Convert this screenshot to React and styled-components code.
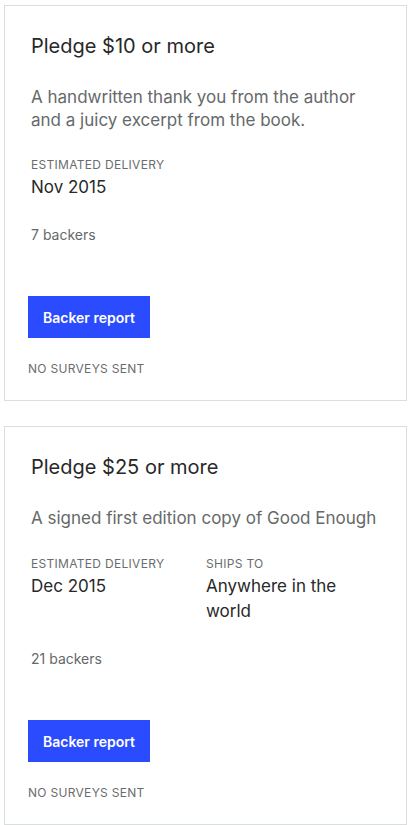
import styled, { createGlobalStyle } from "styled-components";

const GlobalStyle = createGlobalStyle`
  body {
    margin: 0;
    background: #fff;
    font-family: Inter, "Noto Sans", sans-serif;
    -webkit-font-smoothing: antialiased;
  }
`;

const Page = styled.div`
  display: flex;
  flex-direction: column;
  gap: 25px;
  padding: 5px 5px 0 4px;
`;

const Card = styled.section`
  border: 1px solid #dcdedd;
  padding: 26px 23px 23px 23px;
`;

const Title = styled.h2`
  margin: 0 0 0 3px;
  font-size: 20px;
  line-height: 28px;
  font-weight: 400;
  color: #282828;
`;

const Description = styled.p`
  margin: 26px 0 0 3px;
  font-size: 17px;
  line-height: 23px;
  color: #656969;
`;

const Details = styled.div`
  display: grid;
  grid-template-columns: 175px 160px;
  margin: ${(p) => (p.$wide ? 26 : 25)}px 0 0 3px;
`;

const Label = styled.div`
  font-size: 12px;
  line-height: 16px;
  letter-spacing: 0.3px;
  text-transform: uppercase;
  color: #6a6d6d;
`;

const Value = styled.div`
  margin-top: 2px;
  font-size: 17px;
  line-height: 25px;
  color: #282828;
`;

const Backers = styled.p`
  margin: 25px 0 0 3px;
  font-size: 14px;
  line-height: 20px;
  color: #656969;
`;

const Button = styled.button`
  display: block;
  margin-top: 51px;
  height: 42px;
  padding: 0 15px;
  border: none;
  background: #2a4cfe;
  color: #fff;
  font-family: Inter, "Noto Sans", sans-serif;
  font-size: 14px;
  font-weight: 600;
  cursor: pointer;
`;

const Surveys = styled.p`
  margin: 23px 0 0;
  font-size: 12px;
  line-height: 16px;
  letter-spacing: 0.3px;
  color: #6a6d6d;
`;

const rewards = [
  {
    amount: 10,
    description: "A handwritten thank you from the author and a juicy excerpt from the book.",
    delivery: "Nov 2015",
    backers: 7,
  },
  {
    amount: 25,
    description: "A signed first edition copy of Good Enough",
    delivery: "Dec 2015",
    shipsTo: "Anywhere in the world",
    backers: 21,
  },
];

function RewardCard({ reward }) {
  return (
    <Card>
      <Title>Pledge ${reward.amount} or more</Title>
      <Description>{reward.description}</Description>
      <Details $wide={Boolean(reward.shipsTo)}>
        <div>
          <Label>Estimated delivery</Label>
          <Value>{reward.delivery}</Value>
        </div>
        {reward.shipsTo && (
          <div>
            <Label>Ships to</Label>
            <Value>{reward.shipsTo}</Value>
          </div>
        )}
      </Details>
      <Backers>{reward.backers} backers</Backers>
      <Button>Backer report</Button>
      <Surveys>NO SURVEYS SENT</Surveys>
    </Card>
  );
}

export default function App() {
  return (
    <>
      <GlobalStyle />
      <Page>
        {rewards.map((r) => (
          <RewardCard key={r.amount} reward={r} />
        ))}
      </Page>
    </>
  );
}
